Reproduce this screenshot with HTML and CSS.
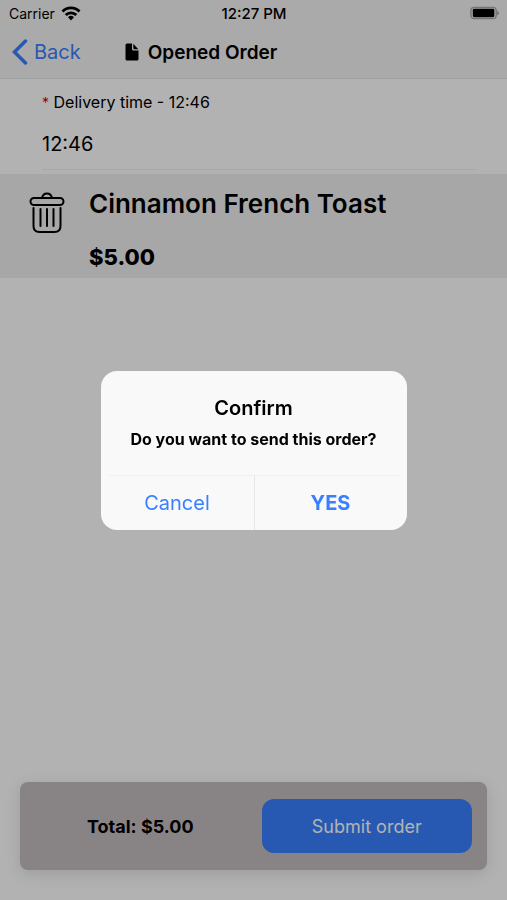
FILE: index.html
```
<!DOCTYPE html>
<html lang="en">
<head>
    <meta charset="UTF-8">
    <meta name="viewport" content="width=device-width, initial-scale=1">
    <title>Opened Order</title>
    <link rel="stylesheet" href="styles.css">
</head>
<body>
    <div class="page">
        <header class="header">
            <div class="statusbar">
                <div class="carrier">
                    <span>Carrier</span>
                    <svg class="wifi" viewBox="0 0 20 15" aria-hidden="true">
                        <path d="M1.500 5.500a12 12 0 0 1 17 0M4.700 9a7.500 7.500 0 0 1 10.600 0" fill="none" stroke="#000" stroke-width="2.800"/>
                        <path d="M7 11.200a4.400 4.400 0 0 1 6 0l-3 3.200z"/>
                    </svg>
                </div>
                <span class="clock">12:27 PM</span>
                <svg class="battery" viewBox="0 0 31 14" aria-hidden="true">
                    <rect x="1" y="1" width="27" height="12" rx="3.500" fill="none" stroke="#a8a8a8" stroke-width="1.500"/>
                    <rect x="3" y="2.500" width="23" height="9" rx="1.500"/>
                    <path d="M29 4.500v5q2-.7 2-2.500t-2-2.500z" fill="#a8a8a8"/>
                </svg>
            </div>
            <div class="toolbar">
                <button class="back" type="button">
                    <svg class="chevron" viewBox="0 0 16 26" aria-hidden="true">
                        <path d="M13.500 2L2.500 13l11 11" fill="none" stroke="currentColor" stroke-width="3.500" stroke-linecap="round" stroke-linejoin="miter"/>
                    </svg>
                    Back
                </button>
                <h1 class="title">
                    <svg class="doc" viewBox="0 0 14 18" aria-hidden="true">
                        <path d="M2 0.500h5V6q0 1.500 1.500 1.500h5V16q0 1.500-1.500 1.500H2Q.5 17.500.5 16V2Q.5.500 2 .500z"/>
                        <path d="M8.300 .800l5 5.400H9.500q-1.200 0-1.200-1.200z"/>
                    </svg>
                    Opened Order
                </h1>
            </div>
        </header>

        <main class="content">
            <div class="field">
                <label class="field-label" for="delivery"><span class="required">*</span> Delivery time - 12:46</label>
                <input class="field-input" id="delivery" type="text" value="12:46">
            </div>

            <div class="item">
                <button class="delete" type="button" aria-label="Remove item">
                    <svg class="trash" viewBox="0 0 36 42" fill="none" stroke="#000" stroke-width="2" stroke-linecap="round" aria-hidden="true">
                        <path d="M13 6q1-4.500 5-4.500T23 6"/>
                        <rect x="1.500" y="6" width="33" height="7" rx="3.500"/>
                        <path d="M4.500 16v18q0 6 6 6h15q6 0 6-6V16M11.500 17v17M18 17v17M24.500 17v17"/>
                    </svg>
                </button>
                <div class="item-text">
                    <h2 class="item-name">Cinnamon French Toast</h2>
                    <p class="item-price">$5.00</p>
                </div>
            </div>
        </main>

        <footer class="summary">
            <strong class="total">Total: $5.00</strong>
            <button class="submit" type="button">Submit order</button>
        </footer>
    </div>

    <div class="backdrop">
        <div class="alert" role="alertdialog" aria-labelledby="alert-title" aria-describedby="alert-text">
            <div class="alert-body">
                <h2 class="alert-title" id="alert-title">Confirm</h2>
                <p class="alert-text" id="alert-text">Do you want to send this order?</p>
            </div>
            <div class="alert-buttons">
                <button class="alert-button" type="button">Cancel</button>
                <button class="alert-button yes" type="button">YES</button>
            </div>
        </div>
    </div>
</body>
</html>
```
FILE: styles.css
```
* {
    box-sizing: border-box;
}

body {
    margin: 0;
    font-family: Inter, "Liberation Sans", sans-serif;
    color: #000;
}

h1, h2, p {
    margin: 0;
}

button {
    padding: 0;
    border: none;
    background: none;
    font-family: inherit;
    cursor: pointer;
}

svg {
    display: block;
}

.page {
    display: flex;
    flex-direction: column;
    min-height: 100vh;
    background-color: #fff;
}

/* header */
.header {
    background-color: #f4f4f4;
    border-bottom: 1px solid #e6e8ea;
}

.statusbar {
    display: grid;
    grid-template-columns: 1fr auto 1fr;
    align-items: center;
    height: 26px;
    padding: 0 8px 0 9px;
    font-size: 14px;
}

.carrier {
    display: flex;
    align-items: center;
    gap: 6px;
}

.wifi {
    width: 20px;
    height: 15px;
}

.clock {
    font-size: 15px;
    font-weight: 500;
}

.battery {
    width: 29px;
    height: 14px;
    justify-self: end;
}

.toolbar {
    display: flex;
    align-items: center;
    gap: 44px;
    height: 52px;
    padding: 0 12px;
}

.back {
    display: flex;
    align-items: center;
    gap: 6px;
    color: #3880ff;
    font-size: 20px;
}

.chevron {
    width: 16px;
    height: 26px;
}

.title {
    display: flex;
    align-items: center;
    gap: 9px;
    font-size: 19px;
    font-weight: 600;
}

.doc {
    width: 14px;
    height: 18px;
}

/* order */
.content {
    flex: 1;
}

.field {
    display: flex;
    flex-direction: column;
    margin: 0 32px 4px 42px;
    padding-top: 11px;
    border-bottom: 1px solid #f0f0f0;
}

.field-label {
    font-size: 16px;
    line-height: 24px;
}

.required {
    color: #e00000;
    font-size: 14px;
}

.field-input {
    width: 100%;
    height: 54px;
    padding: 4px 0 0;
    border: none;
    outline: none;
    background: none;
    font-family: inherit;
    font-size: 20px;
    color: #000;
}

.item {
    display: flex;
    gap: 24px;
    padding: 14px 29px 4px;
    background-color: #efefef;
}

.delete {
    align-self: flex-start;
    padding-top: 4px;
}

.trash {
    width: 36px;
    height: 42px;
}

.item-name {
    font-size: 26px;
    font-weight: 600;
    line-height: 32px;
}

.item-price {
    margin-top: 20px;
    font-size: 22px;
    font-weight: 800;
    line-height: 34px;
}

/* bottom bar */
.summary {
    display: grid;
    grid-template-columns: 1fr 1fr;
    align-items: center;
    gap: 16px;
    margin: 0 20px 30px;
    padding: 17px 15px;
    border-radius: 8px;
    background-color: #c3bebf;
    box-shadow: 0 4px 16px rgba(0, 0, 0, 0.12);
}

.total {
    font-size: 18px;
    font-weight: 700;
    text-align: center;
}

.submit {
    height: 54px;
    border-radius: 12px;
    background-color: #3880ff;
    color: #fff;
    font-size: 18px;
}

/* confirm dialog */
.backdrop {
    position: fixed;
    inset: 0;
    display: flex;
    align-items: center;
    justify-content: center;
    background-color: rgba(0, 0, 0, 0.3);
}

.alert {
    width: 306px;
    max-width: 90%;
    overflow: hidden;
    border-radius: 16px;
    background-color: #f9f9f9;
}

.alert-body {
    margin: 0 8px;
    padding: 23px 8px 24px;
    border-bottom: 1px solid #efefef;
    text-align: center;
}

.alert-title {
    font-size: 20px;
    font-weight: 600;
    line-height: 28px;
}

.alert-text {
    margin-top: 5px;
    font-size: 16px;
    font-weight: 700;
    line-height: 24px;
}

.alert-buttons {
    display: grid;
    grid-template-columns: 1fr 1fr;
}

.alert-button {
    height: 54px;
    color: #3880ff;
    font-size: 20px;
}

.alert-button.yes {
    border-left: 1px solid #e6e6e6;
    font-weight: 700;
}
```
